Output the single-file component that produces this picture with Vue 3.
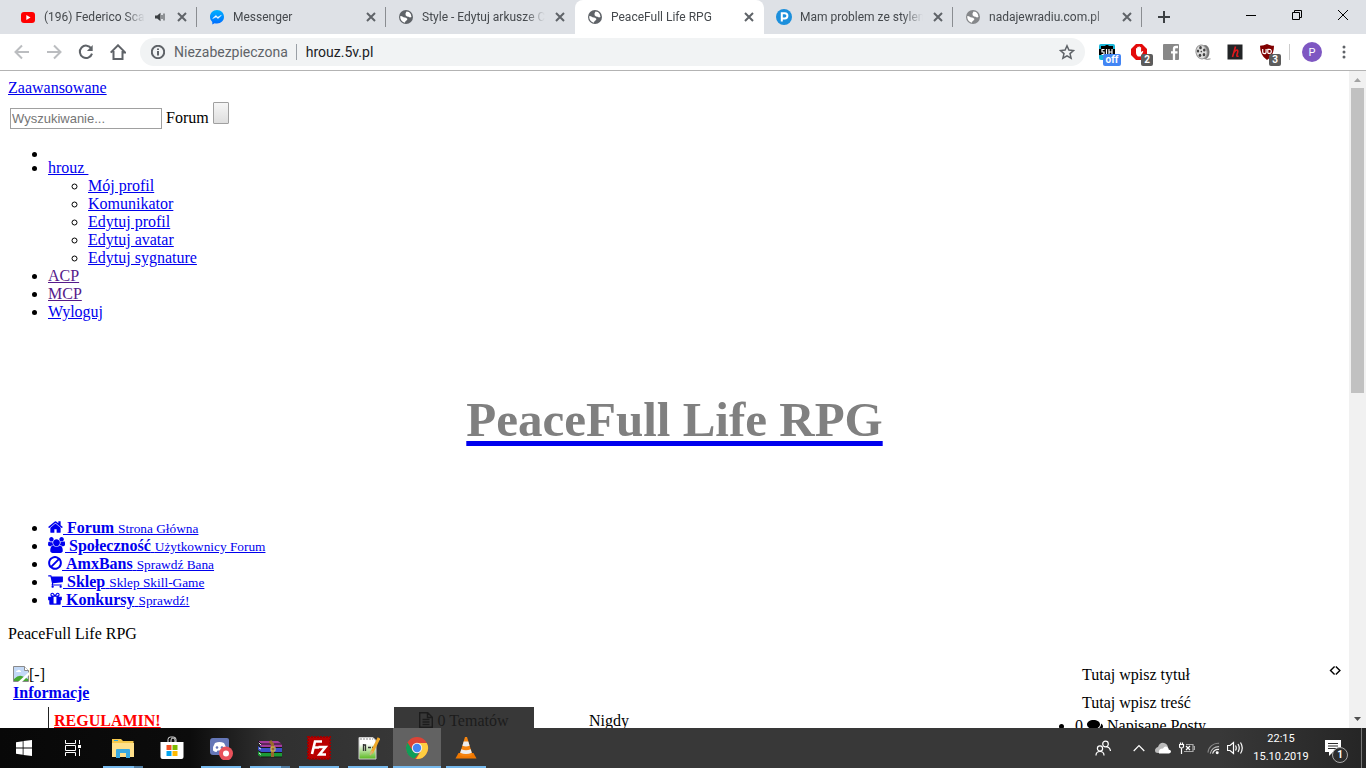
<script setup>
import { ref } from 'vue'

const query = ref('')

const tabs = [
  { title: '(196) Federico Scavo', icon: 'youtube', audio: true },
  { title: 'Messenger', icon: 'messenger' },
  { title: 'Style - Edytuj arkusze CSS', icon: 'globe' },
  { title: 'PeaceFull Life RPG', icon: 'globe', active: true },
  { title: 'Mam problem ze stylem', icon: 'pclub' },
  { title: 'nadajewradiu.com.pl', icon: 'globe', dim: true },
]

const profileLinks = ['Mój profil', 'Komunikator', 'Edytuj profil', 'Edytuj avatar', 'Edytuj sygnature']

const menu = [
  {
    name: 'Forum', note: 'Strona Główna', size: 'w15', box: '64 0 1664 1792',
    d: 'M1472 992v480q0 26-19 45t-45 19h-384v-384h-256v384h-384q-26 0-45-19t-19-45v-480q0-1 .5-3t.5-3l575-474 575 474q1 2 1 6zm223-69l-62 74q-8 9-21 11h-3q-13 0-21-7l-692-577-692 577q-12 8-24 7-13-2-21-11l-62-74q-8-10-7-23.5t11-21.5l719-599q32-26 76-26t76 26l244 204v-195q0-14 9-23t23-9h192q14 0 23 9t9 23v408l219 182q10 8 11 21.5t-7 23.5z',
  },
  {
    name: 'Społeczność', note: 'Użytkownicy Forum', size: 'w17', box: '0 0 1920 1792',
    d: 'M593 896q-162 5-265 128h-134q-82 0-138-40.5t-56-118.5q0-353 124-353 6 0 43.5 21t97.5 42.5 119 21.5q67 0 133-23-5 37-5 66 0 159 93 293zm1071 637q0 120-73 189.5t-194 69.5h-874q-121 0-194-69.5t-73-189.5q0-53 3.5-103.5t14-109 26.5-108.5 43-97.5 62-81 85.5-53.5 111.5-20q10 0 43 21.5t73 48 107 48 135 21.5 135-21.5 107-48 73-48 43-21.5q61 0 111.5 20t85.5 53.5 62 81 43 97.5 26.5 108.5 14 109 3.5 103.5zm-1024-1277q0 106-75 181t-181 75-181-75-75-181 75-181 181-75 181 75 75 181zm704 384q0 159-112.5 271.5t-271.5 112.5-271.5-112.5-112.5-271.5 112.5-271.5 271.5-112.5 271.5 112.5 112.5 271.5zm576 225q0 78-56 118.5t-138 40.5h-134q-103-123-265-128 93-134 93-293 0-29-5-66 66 23 133 23 59 0 119-21.5t97.5-42.5 43.5-21q124 0 124 353zm-128-609q0 106-75 181t-181 75-181-75-75-181 75-181 181-75 181 75 75 181z',
  },
  {
    name: 'AmxBans', note: 'Sprawdź Bana', size: 'w14', box: '128 0 1536 1792',
    d: 'M1440 893q0-161-87-295l-754 753q137 89 297 89 111 0 211.5-43.5t173.5-116.5 116-174.5 43-212.5zm-999 299l755-754q-135-91-300-91-148 0-273 73t-198 199-73 274q0 162 89 299zm1223-299q0 157-61 300t-163.5 246-245 164-298.5 61-298.5-61-245-164-163.5-246-61-300 61-299.5 163.5-245.5 245-164 298.5-61 298.5 61 245 164 163.5 245.5 61 299.5z',
  },
  {
    name: 'Sklep', note: 'Sklep Skill-Game', size: 'w15', box: '64 0 1664 1792',
    d: 'M704 1536q0 52-38 90t-90 38-90-38-38-90 38-90 90-38 90 38 38 90zm896 0q0 52-38 90t-90 38-90-38-38-90 38-90 90-38 90 38 38 90zm128-1088v512q0 24-16.5 42.5t-40.5 21.5l-1044 122q13 60 13 70 0 16-24 64h920q26 0 45 19t19 45-19 45-45 19h-1024q-26 0-45-19t-19-45q0-11 8-31.5t16-36 21.5-40 15.5-29.5l-177-823h-204q-26 0-45-19t-19-45 19-45 45-19h256q16 0 28.5 6.5t19.5 15.5 13 24.5 8 26 5.5 29.5 4.5 26h1201q26 0 45 19t19 45z',
  },
  {
    name: 'Konkursy', note: 'Sprawdź!', size: 'w14', box: '128 0 1536 1792',
    d: 'M1056 1356v-716h-320v716q0 25 18 38.5t46 13.5h192q28 0 46-13.5t18-38.5zm-456-844h195l-126-161q-26-31-69-31-40 0-68 28t-28 68 28 68 68 28zm688-96q0-40-28-68t-68-28q-43 0-69 31l-125 161h194q40 0 68-28t28-68zm376 256v320q0 14-9 23t-23 9h-96v416q0 40-28 68t-68 28h-1088q-40 0-68-28t-28-68v-416h-96q-14 0-23-9t-9-23v-320q0-14 9-23t23-9h440q-93 0-158.5-65.5t-65.5-158.5 65.5-158.5 158.5-65.5q107 0 168 77l128 165 128-165q61-77 168-77 93 0 158.5 65.5t65.5 158.5-65.5 158.5-158.5 65.5h440q14 0 23 9t9 23z',
  },
]
</script>

<template>
  <div class="screen">
    <header class="tabstrip">
      <div class="tabs">
        <div v-for="(tab, i) in tabs" :key="tab.title" class="tab" :class="{ active: tab.active, bare: i === 2 }">
          <svg v-if="tab.icon === 'youtube'" class="fav" viewBox="0 0 16 16">
            <rect x="1" y="3" width="14" height="11" rx="3" fill="#f00" />
            <path d="M6.3 6v5l4.2-2.5z" fill="#fff" />
          </svg>
          <svg v-else-if="tab.icon === 'messenger'" class="fav" viewBox="0 0 16 16">
            <defs>
              <linearGradient id="msg" x1="0" y1="0" x2="0" y2="1">
                <stop offset="0" stop-color="#00b2ff" /><stop offset="1" stop-color="#006aff" />
              </linearGradient>
            </defs>
            <path d="M8 1C3.900 1 1 4 1 7.800c0 2.100.9 3.900 2.300 5.100v2.600l2.300-1.300c.8.2 1.600.3 2.400.3 4.100 0 7-2.900 7-6.700S12.100 1 8 1z" fill="url(#msg)" />
            <path d="M3.700 9.600 6.800 6.400l2 1.800 3.500-1.900-3.200 3.300-2-1.700z" fill="#fff" stroke="#fff" stroke-width=".5" />
          </svg>
          <svg v-else-if="tab.icon === 'globe'" class="fav" :class="{ dim: tab.dim }" viewBox="0 0 16 16">
            <circle cx="8" cy="8" r="7" fill="currentColor" />
            <path fill="#fff" d="M8.500 2.500l2.500.600Q13.500 5 13.500 8l-1.500.500Q10.500 7.500 9 7.500 7 6.500 7.500 4.500zM2.300 7q1.700 0 3.200 1.300 3 .2 4 1.700-.5 1.500-2 2.200l-.7 1.600Q3 12.500 2.300 9z" />
          </svg>
          <svg v-else class="fav" viewBox="0 0 16 16">
            <circle cx="8" cy="8" r="8" fill="#1c8fdc" />
            <path d="M5.800 12.500V4.200h3a2.600 2.600 0 0 1 0 5.200h-3" fill="none" stroke="#fff" stroke-width="2" />
          </svg>
          <span class="title">{{ tab.title }}</span>
          <svg v-if="tab.audio" class="audio" viewBox="0 0 12 10">
            <path d="M0 3.500h2.200L5.500.8v8.400L2.200 6.500H0z" fill="#3c4043" />
            <path d="M7 3v4M9 1.500v7" stroke="#3c4043" fill="none" />
          </svg>
          <button class="close" aria-label="Zamknij kartę">
            <svg viewBox="0 0 10 10"><path d="M1 1l8 8M9 1L1 9" /></svg>
          </button>
        </div>
        <button class="newtab" aria-label="Nowa karta">
          <svg viewBox="0 0 12 12"><path d="M6 0v12M0 6h12" /></svg>
        </button>
      </div>
      <div class="winbtns">
        <button aria-label="Minimalizuj"><svg viewBox="0 0 10 10"><path d="M0 5.500h10" /></svg></button>
        <button aria-label="Przywróć"><svg viewBox="0 0 10 10"><path d="M.5 2.500h7v7h-7zM2.500 2.500v-2h7v7h-2" /></svg></button>
        <button aria-label="Zamknij"><svg viewBox="0 0 10 10"><path d="M0 0l10 10M10 0L0 10" /></svg></button>
      </div>
    </header>

    <div class="toolbar">
      <button class="tool faded" aria-label="Wstecz"><svg viewBox="0 0 16 16"><path d="M15 8H2M8 1.500L1.500 8 8 14.500" /></svg></button>
      <button class="tool faded" aria-label="Dalej"><svg viewBox="0 0 16 16"><path d="M1 8h13M8 1.500L14.500 8 8 14.500" /></svg></button>
      <button class="tool" aria-label="Odśwież"><svg viewBox="0 0 16 16"><path d="M13.300 4.500A6.200 6.200 0 1 0 14 9.600" /><path d="M14.700 1v6H8.900z" class="solid" /></svg></button>
      <button class="tool" aria-label="Strona startowa"><svg viewBox="0 0 16 16"><path d="M3.500 7v8h9V7M.7 8.600L8 1.300l7.300 7.300h-3" /></svg></button>
      <div class="omnibox">
        <svg class="info" viewBox="0 0 14 14"><circle cx="7" cy="7" r="6.200" /><path d="M7 6v4.500M7 3.500v1.500" /></svg>
        <span class="insecure">Niezabezpieczona</span>
        <span class="url">hrouz.5v.pl</span>
        <svg class="star" viewBox="0 0 16 16"><path d="M8 1.800l1.900 4.300 4.600.4-3.500 3.100 1.100 4.600L8 11.800l-4.100 2.400L5 9.600 1.500 6.500l4.600-.4z" /></svg>
      </div>
      <div class="exts">
        <span class="ext">
          <svg viewBox="0 0 16 16"><rect width="16" height="16" rx="2" fill="#19b5d8" /><path d="M2 2h4l1-1h2l1 1h4v3h2v6H0V5h2z" fill="#000" /><path d="M5.500 5.500H3V8h2v2.500H2.500M7.500 5v6M10 5v6M13 5v6M10 8h3" fill="none" stroke="#fff" stroke-width="1.200" /></svg>
          <b class="badge blue">off</b>
        </span>
        <span class="ext">
          <svg viewBox="0 0 16 16"><path d="M5 0h6l5 5v6l-5 5H5l-5-5V5z" fill="#e30b0b" /><path d="M5 7V4.500q.6-1 1.200 0V3.200q.7-1 1.300 0V2.700q.7-1 1.300 0v.7q.7-1 1.300 0V8l1.500-1q1 0 .5.900L9.600 12.500H6.800Q5 10.500 5 9z" fill="#fff" /></svg>
          <b class="badge">2</b>
        </span>
        <span class="ext">
          <svg viewBox="0 0 16 16"><rect width="16" height="16" rx="1" fill="#888" /><path d="M15 3h-2.200Q11 3 11 5v11M8 8.300h6.500" stroke="#fff" stroke-width="2.300" fill="none" /></svg>
        </span>
        <span class="ext">
          <svg viewBox="0 0 16 16"><ellipse cx="10" cy="8" rx="4.500" ry="7" fill="#777" /><path d="M9 14.500q3 1.500 6.500.4" stroke="#888" fill="none" /><ellipse cx="6.500" cy="8" rx="5.500" ry="7" fill="#ddd" stroke="#999" transform="rotate(-12 6.500 8)" /><g fill="#444"><ellipse cx="5.500" cy="3.700" rx="1.300" ry="1.600" /><ellipse cx="3" cy="7" rx="1.200" ry="1.600" /><ellipse cx="9.300" cy="6" rx="1.300" ry="1.600" /><ellipse cx="5" cy="11.300" rx="1.300" ry="1.600" /><ellipse cx="9" cy="10.700" rx="1.300" ry="1.600" /><circle cx="6.300" cy="7.600" r=".8" /></g></svg>
        </span>
        <span class="ext">
          <svg viewBox="0 0 16 16"><rect x=".5" y=".5" width="15" height="15" fill="#222426" /><path d="M8.500 2.500L5.500 13M6.500 9Q9 5.500 10.500 6.200 11.300 7 10 10.500 9.300 13 11.500 12" fill="none" stroke="#e0191d" stroke-width="1.600" /></svg>
        </span>
        <span class="ext">
          <svg viewBox="0 0 16 16"><path d="M8 0q3 1.800 7 1.800 0 10-7 14.200Q1 11.800 1 1.800 5 1.800 8 0z" fill="#800000" /><path d="M3.700 5v3q0 1.700 1.700 1.700T7.100 8V5M8.800 9.300V5.400q3.500-.6 3.500 2t-3.500 1.900" stroke="#fff" stroke-width="1.200" fill="none" /></svg>
          <b class="badge">3</b>
        </span>
      </div>
      <div class="account">
        <button class="avatar">P</button>
      </div>
      <button class="dots" aria-label="Menu"><svg viewBox="0 0 4 14"><circle cx="2" cy="2" r="1.500" /><circle cx="2" cy="7" r="1.500" /><circle cx="2" cy="12" r="1.500" /></svg></button>
    </div>

    <div class="viewport">
      <main class="page">
        <a href="#">Zaawansowane</a>
        <form class="search" @submit.prevent>
          <input v-model="query" type="text" placeholder="Wyszukiwanie..." aria-label="Wyszukiwanie" />
          <span class="scope">Forum</span>
          <button class="go" aria-label="Szukaj"></button>
        </form>

        <ul class="user">
          <li class="empty"></li>
          <li>
            <a href="#">hrouz&nbsp;</a>
            <ul>
              <li v-for="link in profileLinks" :key="link"><a href="#">{{ link }}</a></li>
            </ul>
          </li>
          <li><a href="#" class="seen">ACP</a></li>
          <li><a href="#" class="seen">MCP</a></li>
          <li><a href="#">Wyloguj</a></li>
        </ul>

        <div class="brand"><a href="#"><span>PeaceFull Life RPG</span></a></div>

        <ul class="menu">
          <li v-for="item in menu" :key="item.name">
            <a href="#"><svg :class="item.size" :viewBox="item.box"><path :d="item.d" /></svg><strong>&nbsp;{{ item.name }}</strong>&nbsp;<small>{{ item.note }}</small></a>
          </li>
        </ul>

        <div class="crumb">PeaceFull Life RPG</div>

        <div class="columns">
          <section class="forum">
            <div class="cat">
              <div class="toggle">
                <svg viewBox="0 0 16 16">
                  <path d="M.5.500h11l4 4v11H.5z" fill="#c3d9f7" stroke="#8a8a8a" />
                  <path d="M11.500.500v4h4" fill="#fff" stroke="#8a8a8a" />
                  <path d="M3 6q0-1.500 1.500-1.500Q6 3 7.300 4.500 8.500 5 8 6z" fill="#fff" />
                  <path d="M1 15v-2q5-5 9-2.500l5 2.500v2z" fill="#46a832" />
                  <path d="M16 6v3l-7 7H5z" fill="#fff" />
                </svg><span>[-]</span>
              </div>
              <a href="#"><strong>Informacje</strong></a>
            </div>
            <table>
              <tbody>
                <tr>
                  <td class="name"><a href="#"><strong>REGULAMIN!</strong></a></td>
                  <td class="stat"><svg viewBox="0 0 14 16"><path d="M.7.700h8l4.600 4.600v10H.7zM8.500.700v4.800h4.800M3.500 7.500h7M3.500 10h7M3.500 12.500h7" /></svg> 0 Tematów</td>
                  <td class="last">Nigdy</td>
                </tr>
              </tbody>
            </table>
          </section>
          <aside class="side">
            <div class="sidehead">
              <span>Tutaj wpisz tytuł</span>
              <svg viewBox="0 0 12 10"><path d="M5.600.500L1.500 4.500l4.100 4M6.800.500l4.100 4-4.100 4" /></svg>
            </div>
            <div class="sidetext">Tutaj wpisz treść</div>
            <ul>
              <li>0 <svg viewBox="0 0 16 14"><path d="M6.500 1C2.900 1 0 3 0 5.500c0 1.500 1 2.800 2.500 3.600L1.500 11.500 5 10c4.200.3 8-1.500 8-4.500S10.100 1 6.500 1z" /><path d="M14 4.500c1.300.8 2 1.800 2 3 0 1.300-.8 2.300-2 3.100l1 2.400-3.500-1.600c-1.800.2-3.500 0-4.800-.6 4 0 7.600-2.400 7.300-6.300z" /></svg> Napisane Posty</li>
            </ul>
          </aside>
        </div>
      </main>
      <div class="scroll">
        <svg viewBox="0 0 17 17"><path d="M5 11l3.500-4 3.500 4z" fill="#a3a3a3" /></svg>
        <div class="track"><div class="thumb"></div></div>
        <svg viewBox="0 0 17 17"><path d="M5 6h7l-3.500 4z" fill="#505050" /></svg>
      </div>
    </div>

    <footer class="taskbar">
      <button class="app" aria-label="Start"><svg viewBox="0 0 24 24"><path d="M4 6.200l6.700-1v6.400H4zM11.500 5.100L20 4v7.600h-8.500zM4 12.400h6.700v6.400L4 17.800zM11.500 12.400H20V20l-8.500-1.100z" fill="#fff" /></svg></button>
      <button class="app view" aria-label="Widok zadań"><svg viewBox="0 0 24 24"><path d="M4.500 4v3.500h10V4M4.500 20v-3.500h10V20M4.500 9.500h10v5h-10zM18.500 4v4M18.500 13v7" fill="none" stroke="#fff" /><path d="M17 9h3v3h-3z" fill="#fff" /></svg></button>
      <button class="app open multi" aria-label="Eksplorator plików"><svg viewBox="0 0 24 24"><path d="M1 3h9l2 2h10.500v16H1z" fill="#f5c84c" /><path d="M1 7h22v14H1z" fill="#ffe08a" /><path d="M3 4.500h4" stroke="#2ba4dc" /><path d="M5 22v-8q0-1 1-1h12q1 0 1 1v8h-4v-5H9v5z" fill="#3aa9e0" /></svg></button>
      <button class="app" aria-label="Microsoft Store"><svg viewBox="0 0 24 24"><path d="M8 7V3.500Q8 1 10.500 1h3Q16 1 16 3.500V7M11 7V4q0-2 2-2t2 2v3" fill="none" stroke="#ddd" /><path d="M.5 6h23v15q0 2-2 2h-19q-2 0-2-2z" fill="#fff" /><path d="M6.500 9h5v5h-5z" fill="#f25022" /><path d="M12.500 9h5v5h-5z" fill="#7fba00" /><path d="M6.500 15h5v5h-5z" fill="#00a4ef" /><path d="M12.500 15h5v5h-5z" fill="#ffb900" /></svg></button>
      <button class="app open" aria-label="Discord"><svg viewBox="0 0 24 24"><path d="M4 2h14q2 0 2 2v18l-4-3H4q-3 0-3-3V5q0-3 3-3z" fill="#6577b8" /><path d="M6 7q4.500-2 9 0 2.500 3.500 2 7.500-2 1.500-3.500 1.500l-1-1.500h-4l-1 1.500Q6 16 4 14.500 3.500 10.500 6 7z" fill="#fff" /><circle cx="8" cy="11.500" r="1.300" fill="#6577b8" /><circle cx="13" cy="11.500" r="1.300" fill="#6577b8" /><circle cx="17" cy="17.500" r="7" fill="#e9525b" /><circle cx="17" cy="17.500" r="3" fill="#fff" /></svg></button>
      <button class="app open multi" aria-label="WinRAR"><svg viewBox="0 0 24 24"><path d="M0 5h20l4 3v3H3z" fill="#a43b9b" /><path d="M0 10h3l1 1h20v5H3l-3-1z" fill="#3b51c9" /><path d="M0 15l3 1h21v5H3l-3-2z" fill="#1c9a35" /><path d="M0 5l3 3h21M0 9.500l3 2h21M0 14.500l3 2h21M3 21h21" stroke="#171717" fill="none" /><path d="M1 7l2 2M1 12l2 1M1 17l2 1.500" stroke="#eee" /><path d="M12 5l2.500 3v13" stroke="#9a6a2c" stroke-width="3" fill="none" /><path d="M13 11h4v4h-4z" fill="none" stroke="#e2c25a" /></svg></button>
      <button class="app open" aria-label="FileZilla"><svg viewBox="0 0 24 24"><rect x="1" y="1" width="22" height="22" fill="#b90000" stroke="#9c0000" stroke-width="2" stroke-dasharray="2 1" /><path d="M5 18L8 5.500h7M6.500 11.500H12M11.500 11h7L12.500 18.500H19" fill="none" stroke="#fff" stroke-width="2.600" /></svg></button>
      <button class="app open" aria-label="Notepad++"><svg viewBox="0 0 24 24"><defs><linearGradient id="npp" x1="0" y1="0" x2="0" y2="1"><stop offset=".3" stop-color="#fff" /><stop offset="1" stop-color="#59b81e" /></linearGradient></defs><path d="M3 1.500h14l3 3V23H3z" fill="url(#npp)" stroke="#ccc" /><path d="M4 3h13" stroke="#888" stroke-dasharray="2 1" /><path d="M7.500 8v7M7.500 9h2v6M12 11.500h3M16 11.500h3" stroke="#333" fill="none" stroke-width="1.300" /><path d="M23 2l-7.500 15" stroke="#f0a92a" stroke-width="3" /><path d="M16.500 15l-2.500 4" stroke="#d9b27a" stroke-width="1.500" /></svg></button>
      <button class="app open current" aria-label="Google Chrome"><svg viewBox="0 0 24 24"><circle cx="12" cy="12" r="11" fill="#db4437" /><path d="M2.500 6.500L7.500 14.600Q9 17 12 17l2 .5-4.500 5.300A11 11 0 0 1 2.500 6.500z" fill="#0f9d58" /><path d="M12 7h9.800A11 11 0 0 1 11 23l5.300-8.500Q18 10 12 7z" fill="#ffcd40" /><circle cx="12" cy="12" r="5.200" fill="#f1f1f1" /><circle cx="12" cy="12" r="4.200" fill="#4285f4" /></svg></button>
      <button class="app open" aria-label="VLC"><svg viewBox="0 0 24 24"><path d="M4.500 17h15l3 5.500h-21z" fill="#f07800" /><path d="M11 1h2l5.500 18q-6.500 3-13 0z" fill="#f58410" /><path d="M9.700 5.500h4.600l1.300 4.300q-3.600 1.500-7.200 0zM7.300 13.300q4.700 1.800 9.400 0l1.100 3.500q-5.800 2.400-11.600 0z" fill="#eee" /></svg></button>

      <div class="tray">
        <svg class="people" viewBox="0 0 16 16"><circle cx="10.500" cy="4" r="2.800" /><path d="M15.500 11q-.5-4-4-4.200M1 15.500q0-4 4-4t4 4" /><circle cx="5" cy="8.500" r="2.600" /></svg>
        <svg class="chev" viewBox="0 0 12 8"><path d="M.7 7L6 1.500 11.300 7" /></svg>
        <svg class="cloud" viewBox="0 0 16 12"><path d="M3 5Q5 0 9 1q3 .5 4 4l-9 6H3Q0 11 0 8.500T3 5z" fill="#bbb" /><path d="M4 11.500q-1-5 4-5Q9.500 3.500 12.500 5q1.300 1 1.200 2.500 2.300.3 2.300 2t-2 2z" fill="#fff" /></svg>
        <svg class="battery" viewBox="0 0 16 12"><path d="M7 2.500h7v7H5" stroke="#aaa" /><path d="M14.500 4.500h1v3h-1" stroke="#aaa" /><path d="M.5 2.500h4v2q0 1.500-2 1.500t-2-1.500zM1.500.500v2M3.500.500v2M2.500 6v6M7 4l4 4M11 4L7 8" /></svg>
        <svg class="wifi" viewBox="0 0 14 14"><path d="M1 12A11 11 0 0 1 13 2" stroke="#888" /><path d="M3.500 13A9 9 0 0 1 13 5.500" stroke="#bbb" /><path d="M6 13A6.500 6.500 0 0 1 13 8.500" stroke="#eee" /><circle cx="11" cy="12" r="1.600" fill="#fff" stroke="none" /></svg>
        <svg class="sound" viewBox="0 0 17 14"><path d="M.5 4.500h2.500l3.500-3v11L3 9.500H.5zM8.500 4.500q1.500 2.500 0 5M11 3q2.500 4 0 8M13.500 1.500q3.500 5.500 0 11" /></svg>
        <div class="clock"><span>22:15</span><span>15.10.2019</span></div>
        <div class="notes">
          <svg viewBox="0 0 16 17"><path d="M0 0h16v12h-8l-4 4v-4H0z" fill="#fff" /><path d="M3 3.500h10M3 6h10M3 8.500h10" stroke="#2d2d2d" /></svg>
          <b>1</b>
        </div>
        <div class="edge"></div>
      </div>
    </footer>
  </div>
</template>

<style>
body { margin: 0; overflow: hidden; }
</style>

<style scoped>
.screen { display: flex; flex-direction: column; height: 100vh; background: #fff; font-family: Roboto, "Open Sans", sans-serif; color: #000; }
button { border: 0; padding: 0; background: none; font: inherit; display: flex; align-items: center; justify-content: center; }
svg { flex: none; }

.tabstrip { display: flex; justify-content: space-between; flex: none; height: 34px; background: #dee1e6; }
.tabs { display: flex; flex: 1; min-width: 0; padding-left: 8px; }
.tab { box-sizing: border-box; display: flex; align-items: center; flex: 0 1 189px; min-width: 0; padding: 0 10px 0 12px; position: relative; color: #5f6368; }
.tab::after { content: ""; position: absolute; right: 0; top: 7px; width: 1px; height: 20px; background: #8a8d91; }
.tab.active::after, .tab.bare::after { display: none; }
.tab.active { background: #fff; border-radius: 8px 8px 0 0; }
.fav { width: 16px; height: 16px; margin-right: 8px; }
.fav.dim { color: #85878a; }
.title { flex: 1; min-width: 0; overflow: hidden; white-space: nowrap; font-size: 12px; line-height: 18px; color: #45494d; margin-right: 10px; -webkit-mask-image: linear-gradient(to right, #000 calc(100% - 20px), transparent); mask-image: linear-gradient(to right, #000 calc(100% - 20px), transparent); }
.audio { width: 12px; height: 10px; margin-right: 10px; }
.close svg { width: 10px; height: 10px; stroke: #5f6368; stroke-width: 2; }
.newtab { width: 44px; }
.newtab svg { width: 12px; height: 12px; stroke: #3c4043; stroke-width: 2; }
.winbtns { display: flex; height: 29px; }
.winbtns button { width: 46px; }
.winbtns svg { width: 10px; height: 10px; fill: none; stroke: #000; }

.toolbar { display: flex; align-items: center; flex: none; height: 36px; padding: 0 12px 0 6px; border-bottom: 1px solid #b3b3b3; }
.tool { width: 32px; height: 28px; }
.tool svg { width: 16px; height: 16px; fill: none; stroke: #5f6368; stroke-width: 2; }
.tool.faded svg { stroke: #bbbdc0; }
.tool .solid { fill: #5f6368; stroke: none; }
.omnibox { display: flex; align-items: center; flex: 1; height: 28px; margin: 0 6px; padding: 0 10px 0 11px; border-radius: 14px; background: #f1f3f4; font-size: 14px; line-height: 20px; }
.info { width: 14px; height: 14px; margin-right: 9px; fill: none; stroke: #5f6368; stroke-width: 2; }
.insecure { color: #5f6368; padding-right: 8px; }
.url { flex: 1; color: #202124; position: relative; padding-left: 10px; }
.url::before { content: ""; position: absolute; left: 0; top: 2px; width: 1px; height: 16px; background: #9aa0a6; }
.star { width: 16px; height: 16px; fill: none; stroke: #5f6368; stroke-width: 1.500; }
.exts { display: flex; }
.ext { position: relative; display: flex; justify-content: center; width: 32px; }
.ext svg { width: 16px; height: 16px; }
.badge { position: absolute; left: 18px; top: 10px; min-width: 12px; height: 12px; border-radius: 2px; background: #5c5c5c; color: #fff; font-size: 10px; line-height: 12px; text-align: center; }
.badge.blue { left: 12px; min-width: 18px; background: #4285f4; }
.account { display: flex; align-items: center; margin-left: 6px; padding: 0 12px; border-left: 1px solid #ccc; height: 16px; }
.avatar { width: 20px; height: 20px; border-radius: 50%; background: #7e57c2; color: #fff; font-size: 11px; }
.dots { width: 20px; height: 28px; }
.dots svg { width: 4px; height: 14px; fill: #5f6368; }

.viewport { display: flex; flex: 1; min-height: 0; overflow: hidden; }
.page { flex: 1; min-width: 0; padding: 8px; font-family: "Liberation Serif", serif; font-size: 16px; line-height: 18px; }
.page > a { display: block; }
.page a { color: #00e; text-decoration: underline; }
.page a.seen { color: #551a8b; }
.search { display: flex; align-items: flex-end; gap: 4px; padding: 5px 0 0 2px; }
.search input { box-sizing: border-box; width: 152px; height: 21px; padding: 1px; border: 1px solid #a0a0a0; font-family: "Liberation Sans", sans-serif; font-size: 13px; }
.search input::placeholder { color: #757575; }
.scope { padding-bottom: 2px; }
.go { box-sizing: border-box; width: 16px; height: 22px; margin-bottom: 5px; border: 1px solid #a0a0a0; border-radius: 1px; background: linear-gradient(#f6f6f6, #dedede); }
.page ul { margin: 16px 0; padding-left: 40px; list-style: disc; }
.page ul ul { margin: 0; list-style: circle; }
.page .empty { height: 14px; }
.brand { padding: 53px 0; text-align: center; font-size: 49px; line-height: 60px; font-weight: 700; }
.brand a { text-decoration-thickness: 5px; text-underline-offset: 5px; }
.brand span { color: #808080; }
.menu svg { height: 16px; fill: #00e; vertical-align: -2px; }
.menu li { height: 18px; }
.menu small { font-size: smaller; }
.w14 { width: 14px; }
.w15 { width: 15px; }
.w17 { width: 17px; }
.columns { display: flex; padding-top: 23px; }
.forum { flex: 1; min-width: 0; }
.cat { padding: 0 5px 5px; }
.toggle { display: flex; }
.toggle svg { width: 16px; height: 16px; }
table { width: 100%; padding-left: 40px; border-spacing: 0; table-layout: fixed; }
td { padding: 5px; }
.name { width: 335px; border-left: 1px solid #222; }
.page .name a { color: #f00; }
.stat { width: 130px; background: #383838; color: #1c1c1c; text-align: center; }
.stat svg { width: 14px; height: 16px; fill: none; stroke: #1c1c1c; stroke-width: 1.400; vertical-align: -2px; }
.last { padding-left: 55px; }
.side { flex: 0 0 306px; }
.sidehead { display: flex; justify-content: space-between; padding-left: 47px; }
.sidehead svg { width: 12px; height: 10px; fill: none; stroke: #000; stroke-width: 1.400; }
.sidetext { padding: 10px 0 5px 47px; }
.page .side ul { margin: 0; }
.side li svg { width: 16px; height: 14px; vertical-align: -2px; }

.scroll { display: flex; flex-direction: column; flex: none; width: 17px; background: #f1f1f1; }
.scroll svg { width: 17px; height: 17px; }
.track { flex: 1; padding: 0 2px; }
.thumb { height: 49%; background: #c1c1c1; }

.taskbar { display: flex; align-items: stretch; gap: 1px; flex: none; height: 40px; background: linear-gradient(to right, #080808 0, #0c0c0c 190px, #303030 270px, #383838 420px, #383838 1220px, #252525 100%); }
.app { width: 48px; position: relative; }
.app svg { width: 24px; height: 24px; }
.app.view { margin-right: 1px; }
.app.open::after { content: ""; position: absolute; left: 4px; right: 4px; bottom: 0; height: 2px; background: #76b9ed; }
.app.multi::after { background: linear-gradient(to right, #76b9ed 31px, #4f7ba0 31px); }
.app.current { background: #626262; }
.app.current::after { left: 0; right: 0; }
.tray { display: flex; align-items: center; margin-left: auto; color: #fff; }
.tray > svg { fill: none; stroke: #fff; stroke-width: 1.200; }
.tray .people { width: 16px; height: 16px; margin-right: 22px; }
.tray .chev { width: 12px; height: 8px; margin-right: 10px; }
.tray .cloud { width: 16px; height: 12px; margin-right: 8px; stroke: none; }
.tray .battery { width: 16px; height: 12px; margin-right: 12px; }
.tray .wifi { width: 13px; height: 14px; margin-right: 7px; }
.tray .sound { width: 17px; height: 14px; margin-right: 9px; }
.clock { display: flex; flex-direction: column; align-items: center; width: 56px; font-size: 11px; line-height: 18px; white-space: nowrap; }
.notes { position: relative; width: 16px; height: 17px; margin: 0 20px 0 16px; }
.notes svg { width: 16px; height: 17px; }
.notes b { position: absolute; left: 7px; top: 7px; box-sizing: border-box; width: 16px; height: 16px; border: 1px solid #aaa; border-radius: 50%; background: #2d2d2d; font-size: 10px; line-height: 14px; text-align: center; }
.edge { width: 4px; height: 40px; border-left: 1px solid #777; }
</style>
